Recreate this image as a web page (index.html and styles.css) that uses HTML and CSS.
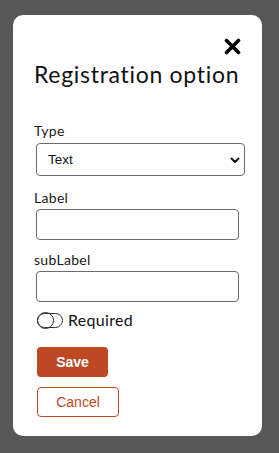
FILE: index.html
```html
<!DOCTYPE html>
<html lang="en">
<head>
    <meta charset="UTF-8">
    <meta name="viewport" content="width=device-width, initial-scale=1.0">
    <title>Registration option</title>
    <link rel="stylesheet" href="styles.css">
</head>
<body>
    <div class="modal">
        <div class="modal-head">
            <button class="close-btn" aria-label="Close">
                <svg width="17" height="17" viewBox="0 0 17 17">
                    <path d="M2.5 2.5 L14.5 14.5 M14.5 2.5 L2.5 14.5" stroke="#000" stroke-width="3.6" stroke-linecap="round"/>
                </svg>
            </button>
            <h1>Registration option</h1>
        </div>

        <form class="modal-form">
            <div class="field field-select">
                <label>Type</label>
                <div class="select-wrap">
                    <select>
                        <option>Text</option>
                    </select>
                    <svg class="chevron" width="10" height="7" viewBox="0 0 10 7">
                        <path d="M1.5 1.5 L5 5 L8.5 1.5" fill="none" stroke="#111" stroke-width="2" stroke-linecap="round" stroke-linejoin="round"/>
                    </svg>
                </div>
            </div>

            <div class="field">
                <label>Label</label>
                <input type="text">
            </div>

            <div class="field">
                <label>subLabel</label>
                <input type="text">
            </div>

            <div class="toggle-row">
                <span class="toggle"></span>
                <span>Required</span>
            </div>

            <div class="actions">
                <button type="button" class="btn btn-save">Save</button>
                <button type="button" class="btn btn-cancel">Cancel</button>
            </div>
        </form>
    </div>
</body>
</html>
```

FILE: styles.css
```css
:root {
    --overlay: #575757;
    --rust: #bf4824;
    --border: #6b6b6b;
}

* {
    margin: 0;
    padding: 0;
    box-sizing: border-box;
}

body {
    background: var(--overlay);
    font-family: 'Lato', 'Liberation Sans', sans-serif;
    color: #111;
    padding: 15px 17px 17px 13px;
}

.modal {
    background: #fff;
    border-radius: 10px;
    height: 421px;
    padding: 23px 21px 0 21px;
}

.modal-head {
    display: flex;
    flex-direction: column;
}

.close-btn {
    align-self: flex-end;
    background: none;
    border: none;
    width: 17px;
    height: 17px;
    cursor: pointer;
}

.close-btn svg {
    display: block;
}

.modal-head h1 {
    font-weight: 400;
    font-size: 23px;
    line-height: 28px;
    margin-top: 5px;
    letter-spacing: 0.7px;
    white-space: nowrap;
}

.modal-form {
    display: flex;
    flex-direction: column;
    margin-top: 35px;
}

.field {
    display: flex;
    flex-direction: column;
    margin-bottom: 12px;
}

.field-select {
    margin-bottom: 14px;
}

.field label {
    font-size: 14px;
    line-height: 16px;
    letter-spacing: 0.3px;
    color: #1a1a1a;
    margin-bottom: 3px;
}

.field-select label {
    margin-bottom: 4px;
}

.select-wrap {
    position: relative;
    margin-left: 2px;
    width: 209px;
}

select {
    appearance: none;
    display: block;
    width: 100%;
    height: 33px;
    border: 1px solid var(--border);
    border-radius: 4px;
    background: #fff;
    font-family: 'Liberation Sans', Arial, sans-serif;
    font-size: 13.5px;
    padding-left: 11px;
    color: #111;
}

.chevron {
    position: absolute;
    right: 5px;
    top: 14px;
}

input[type="text"] {
    display: block;
    margin-left: 2px;
    width: 203px;
    height: 31px;
    border: 1px solid var(--border);
    border-radius: 4px;
}

.toggle-row {
    display: flex;
    align-items: center;
    gap: 5px;
    margin-top: -3px;
    margin-left: 3px;
    font-size: 16px;
    line-height: 18px;
    letter-spacing: 0.3px;
}

.toggle {
    width: 26px;
    height: 15px;
    border: 1.5px solid #333;
    border-radius: 8px;
    position: relative;
}

.toggle::before {
    content: '';
    position: absolute;
    left: -1.5px;
    top: -1.5px;
    width: 15px;
    height: 15px;
    border: 1.5px solid #333;
    border-radius: 50%;
}

.actions {
    display: flex;
    flex-direction: column;
    align-items: flex-start;
    gap: 10px;
    margin-top: 18px;
    margin-left: 3px;
}

.btn {
    font-family: 'Liberation Sans', Arial, sans-serif;
    font-size: 14px;
    border-radius: 4px;
    cursor: pointer;
}

.btn-save {
    background: var(--rust);
    color: #fff;
    font-weight: 700;
    border: none;
    width: 71px;
    height: 30px;
}

.btn-cancel {
    background: #fff;
    color: var(--rust);
    border: 1.5px solid var(--rust);
    width: 82px;
    height: 30px;
}
```
